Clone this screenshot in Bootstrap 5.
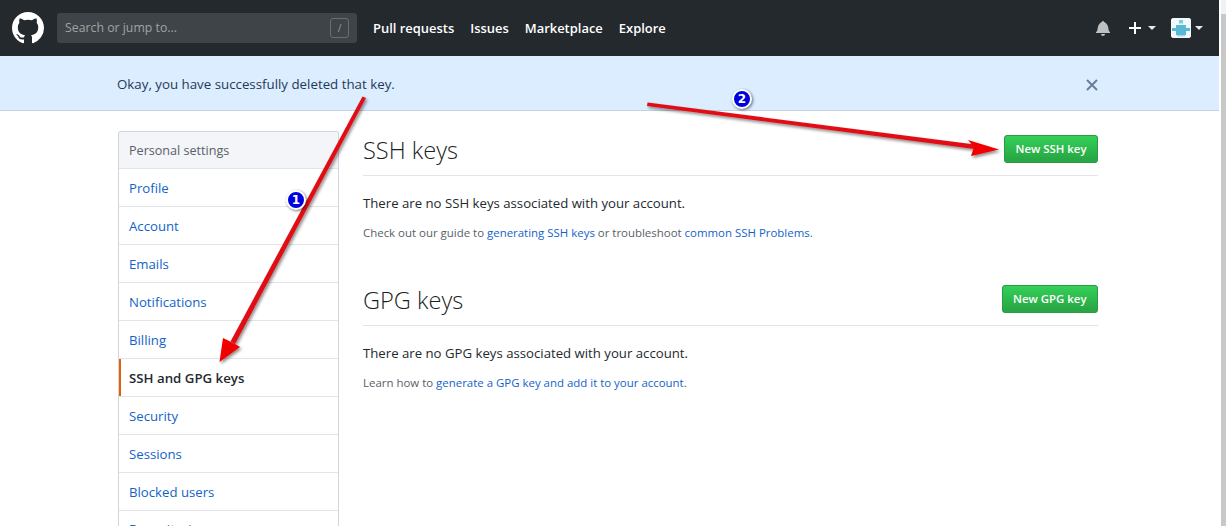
<!DOCTYPE html>
<html lang="en">
<head>
<meta charset="utf-8">
<title>SSH and GPG keys</title>
<link href="https://cdn.jsdelivr.net/npm/bootstrap@5.3.0/dist/css/bootstrap.min.css" rel="stylesheet">
<style>
html,body{height:526px;overflow:hidden}
body{font-family:"Open Sans","Noto Sans","Liberation Sans",sans-serif;font-size:13.2px;color:#24292e;background:#fff;position:relative}
.shell{height:526px}
.pagecol{width:1219px;flex:none}
.sbar{width:7px;border-left:2px solid #fff;background:#c8c8c8}
.sbar-top{height:14px;background:#f1f1f1}
.ghead{height:56px;background:#24292e;padding:0 16px 0 12px}
.ghead svg{display:block}
.searchbox{width:300px;height:30px;background:#3f4448;border-radius:3px;margin-left:13px;padding:0 8px;color:#a0a3a6;font-size:12.3px}
.slashkey{width:19px;height:20px;border:1px solid #6a6e72;border-radius:3px;font-size:10px;color:#9a9da0}
.topnav{margin-left:16px;gap:16px;padding-top:1px}
.topnav a{color:#fff;font-weight:600;font-size:12.95px;text-decoration:none;white-space:nowrap}
.caretd{width:0;height:0;border-left:4px solid transparent;border-right:4px solid transparent;border-top:4px solid #fff;opacity:.9}
.avatarbox{width:20px;height:20px;border-radius:3px;background:#eef6fa;overflow:hidden;margin-left:15px}
.plusmark{margin-left:19px}
.caret-a{margin-left:7px}
.caret-b{margin-left:4px}
.flashbar{height:55px;background:#dbedff;border-bottom:1px solid #c0d3e2;padding:3px 121px 0 117px;font-size:13.3px;color:#1f3a58}
.wrap{padding:20px 0 0 118px;gap:24px}
.sidemenu{width:221px;flex:none;border-radius:3px 3px 0 0;border:1px solid #d1d5da;border-bottom:0}
.sidehead{height:37px;background:#f3f5f8;color:#586069;font-weight:500;font-size:12.6px;padding:2px 10px 0;border-bottom:1px solid #e1e4e8;border-radius:3px 3px 0 0}
.sideitem{height:38px;padding:2px 10px 0;border-bottom:1px solid #e1e4e8;color:#1263c9;text-decoration:none;font-size:13.2px;box-sizing:border-box}
.sideitem.current{color:#24292e;font-weight:600;font-size:13.25px;box-shadow:inset 2px 0 0 #e36209}
.sideitem.lastrow{padding-top:0}
.mainpane{width:735px;flex:none}
.subhead{height:45px;border-bottom:1px solid #e1e4e8;padding-top:4px}
.subhead h2{font-size:23.6px;font-weight:300;margin:0;color:#1b1f23;line-height:30px}
.greenbtn{height:28px;padding:0 10.5px;font-size:11.4px;font-weight:600;color:#fff;background:linear-gradient(#34d058,#28a745 90%);background-color:#28a745;border:1px solid #2a9a44;border-radius:3px;line-height:1;white-space:nowrap;--bs-btn-hover-color:#fff}
.mainline{margin:19px 0 0;font-size:13.2px;line-height:17px}
.noteline{margin:12px 0 0;font-size:11.45px;line-height:17px;color:#586069}
.noteline a{color:#1263c9;text-decoration:none}
.gpgsec{margin-top:40px}
.anno{position:absolute;left:0;top:0;pointer-events:none}
.numdot{position:absolute;width:20px;height:20px;border-radius:50%;background:#0000e0;border:2px solid #fff;box-shadow:1px 1px 3px rgba(0,0,0,.55);color:#fff;font-family:"DejaVu Sans",sans-serif;font-size:12px;font-weight:700;line-height:16px;text-align:center}
.dot-one{left:286px;top:190px}
.dot-two{left:732px;top:89px}
</style>
</head>
<body>
<div class="shell d-flex">
<div class="pagecol">
  <header class="ghead d-flex align-items-center">
    <svg width="32" height="32" viewBox="0 0 16 16" fill="#fff" aria-label="GitHub"><path fill-rule="evenodd" d="M8 0C3.58 0 0 3.58 0 8c0 3.54 2.29 6.53 5.47 7.59.4.07.55-.17.55-.38 0-.19-.01-.82-.01-1.49-2.01.37-2.53-.49-2.69-.94-.09-.23-.48-.94-.82-1.13-.28-.15-.68-.52-.01-.53.63-.01 1.08.58 1.23.82.72 1.21 1.87.87 2.33.66.07-.52.28-.87.51-1.07-1.78-.2-3.64-.89-3.64-3.95 0-.87.31-1.59.82-2.15-.08-.2-.36-1.02.08-2.12 0 0 .67-.21 2.2.82.64-.18 1.32-.27 2-.27.68 0 1.36.09 2 .27 1.53-1.04 2.2-.82 2.2-.82.44 1.1.16 1.92.08 2.12.51.56.82 1.27.82 2.15 0 3.07-1.87 3.75-3.65 3.95.29.25.54.73.54 1.48 0 1.07-.01 1.93-.01 2.2 0 .21.15.46.55.38A8.013 8.013 0 0 0 16 8c0-4.42-3.58-8-8-8z"/></svg>
    <div class="searchbox d-flex align-items-center justify-content-between"><span>Search or jump to...</span><span class="slashkey d-flex align-items-center justify-content-center">/</span></div>
    <nav class="topnav d-flex"><a href="#">Pull requests</a><a href="#">Issues</a><a href="#">Marketplace</a><a href="#">Explore</a></nav>
    <div class="ms-auto d-flex align-items-center">
      <svg width="14" height="16" viewBox="0 0 14 16" fill="#fff" fill-opacity=".7"><path d="M14 12v1H0v-1l.73-.58c.77-.77.81-2.55 1.19-4.42C2.69 3.23 6 2 6 2c0-.55.45-1 1-1s1 .45 1 1c0 0 3.39 1.23 4.16 5 .38 1.88.42 3.66 1.19 4.42l.66.58H14zm-7 4c1.11 0 2-.89 2-2H5c0 1.11.89 2 2 2z"/></svg>
      <svg class="plusmark" width="12" height="12" viewBox="0 0 12 12" fill="#fff"><path d="M5 0h2v5h5v2H7v5H5V7H0V5h5z"/></svg>
      <span class="caretd caret-a"></span>
      <span class="avatarbox"><svg width="20" height="20" viewBox="0 0 20 20"><rect width="20" height="20" fill="#f2f8fb"/><rect x="8" y="2" width="4" height="3.500" fill="#7fcbd8"/><rect x="5" y="7" width="10" height="10" fill="#57b9d3"/><rect x="1" y="10" width="18" height="3" fill="#57b9d3"/><rect x="6" y="17" width="8" height="1.500" fill="#a5d9e5"/></svg></span>
      <span class="caretd caret-b"></span>
    </div>
  </header>
  <div class="flashbar d-flex align-items-center justify-content-between">
    <span>Okay, you have successfully deleted that key.</span>
    <svg width="12" height="12" viewBox="0 0 12 12" stroke="#6a7f97" stroke-width="2" fill="none" aria-label="Close"><path d="M1 1l10 10M11 1L1 11"/></svg>
  </div>
  <div class="wrap d-flex">
    <aside class="sidemenu">
      <div class="sidehead d-flex align-items-center">Personal settings</div>
      <div class="d-flex flex-column">
        <a class="sideitem d-flex align-items-center" href="#">Profile</a>
        <a class="sideitem d-flex align-items-center" href="#">Account</a>
        <a class="sideitem d-flex align-items-center" href="#">Emails</a>
        <a class="sideitem d-flex align-items-center" href="#">Notifications</a>
        <a class="sideitem d-flex align-items-center" href="#">Billing</a>
        <a class="sideitem current d-flex align-items-center" href="#">SSH and GPG keys</a>
        <a class="sideitem d-flex align-items-center" href="#">Security</a>
        <a class="sideitem d-flex align-items-center" href="#">Sessions</a>
        <a class="sideitem d-flex align-items-center" href="#">Blocked users</a>
        <a class="sideitem lastrow d-flex align-items-center" href="#">Repositories</a>
      </div>
    </aside>
    <main class="mainpane">
      <section>
        <div class="subhead d-flex justify-content-between align-items-start"><h2>SSH keys</h2><a class="btn greenbtn d-flex align-items-center" href="#">New SSH key</a></div>
        <p class="mainline">There are no SSH keys associated with your account.</p>
        <p class="noteline">Check out our guide to <a href="#">generating SSH keys</a> or troubleshoot <a href="#">common SSH Problems</a>.</p>
      </section>
      <section class="gpgsec">
        <div class="subhead d-flex justify-content-between align-items-start"><h2>GPG keys</h2><a class="btn greenbtn d-flex align-items-center" href="#">New GPG key</a></div>
        <p class="mainline">There are no GPG keys associated with your account.</p>
        <p class="noteline">Learn how to <a href="#">generate a GPG key and add it to your account</a>.</p>
      </section>
    </main>
  </div>
</div>
<div class="sbar"><div class="sbar-top"></div></div>
</div>
<svg class="anno" width="1226" height="526" viewBox="0 0 1226 526">
  <defs><filter id="shd" x="-20%" y="-20%" width="140%" height="140%"><feDropShadow dx="1.500" dy="2" stdDeviation="1.500" flood-color="#000" flood-opacity=".45"/></filter></defs>
  <g filter="url(#shd)">
    <path fill="#e00f12" d="M362.500 96.500l3.500 1.500L235 344l-4.500-2.500z"/>
    <path fill="#f00606" d="M219.500 362L223 338l8 4 3 1.500 6 3.500z"/>
    <path fill="#e00f12" d="M647 106l.5-3.500L975 144.500l-.5 4.500z"/>
    <path fill="#f00606" d="M999 149.500L968 140l6 7-3 9z"/>
  </g>
</svg>
<div class="numdot dot-one">1</div>
<div class="numdot dot-two">2</div>
<script src="https://cdn.jsdelivr.net/npm/bootstrap@5.3.0/dist/js/bootstrap.bundle.min.js"></script>
</body>
</html>
